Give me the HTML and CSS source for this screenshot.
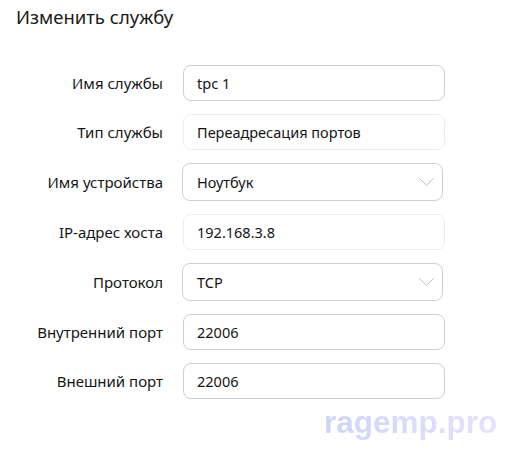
FILE: index.html
```html
<!DOCTYPE html>
<html lang="ru">
<head>
<meta charset="utf-8">
<link rel="stylesheet" href="styles.css">
</head>
<body>
<div class="page">
  <h1 class="title">Изменить службу</h1>
  <form class="form">
    <label class="label">Имя службы</label>
    <div class="input">tpc 1</div>

    <label class="label">Тип службы</label>
    <div class="input input--disabled">Переадресация портов</div>

    <label class="label">Имя устройства</label>
    <div class="select">
      <span>Ноутбук</span>
      <svg class="chev" width="15" height="8" viewBox="0 0 15 8"><path d="M0.5 0.5 L7.5 7.2 L14.5 0.5" fill="none" stroke="#bdbdbd" stroke-width="1"/></svg>
    </div>

    <label class="label">IP-адрес хоста</label>
    <div class="input input--disabled">192.168.3.8</div>

    <label class="label">Протокол</label>
    <div class="select">
      <span>TCP</span>
      <svg class="chev" width="15" height="8" viewBox="0 0 15 8"><path d="M0.5 0.5 L7.5 7.2 L14.5 0.5" fill="none" stroke="#bdbdbd" stroke-width="1"/></svg>
    </div>

    <label class="label">Внутренний порт</label>
    <div class="input">22006</div>

    <label class="label">Внешний порт</label>
    <div class="input">22006</div>
  </form>
  <div class="watermark">ragemp.pro</div>
</div>
</body>
</html>
```

FILE: styles.css
```css
* { box-sizing: border-box; }
html, body {
  margin: 0;
  padding: 0;
  background: #ffffff;
}
body {
  font-family: "Noto Sans", "Open Sans", sans-serif;
  color: #1c1c1c;
  width: 507px;
  height: 457px;
  overflow: hidden;
}
.page {
  position: relative;
  height: 457px;
  padding: 4px 0 0 16px;
}
.title {
  margin: 0;
  font-size: 18.5px;
  line-height: 25px;
  font-weight: 400;
  color: #1a1a1a;
}
.form {
  display: grid;
  grid-template-columns: 147px 262px;
  column-gap: 20px;
  row-gap: 13px;
  align-items: center;
  margin-top: 36px;
}
.label {
  text-align: right;
  font-size: 15px;
  color: #151515;
}
.input {
  height: 36px;
  border: 1px solid #cfcfcf;
  border-radius: 8px;
  padding: 0 13px;
  display: flex;
  align-items: center;
  font-size: 14.5px;
  color: #141414;
}
.input--disabled {
  border-color: #ededed;
}
.select {
  height: 38px;
  width: 261px;
  margin-left: -1px;
  border: 1px solid #cfcfcf;
  border-radius: 8px;
  padding: 0 8px 0 14px;
  display: flex;
  align-items: center;
  justify-content: space-between;
  font-size: 14.5px;
  color: #141414;
}
.chev { display: block; }
.watermark {
  position: absolute;
  left: 324px;
  top: 404px;
  font-family: "Liberation Sans", Arial, sans-serif;
  font-weight: 700;
  font-size: 31.5px;
  line-height: 36px;
  background: linear-gradient(90deg, #ccd5fb, #e8e0fb);
  -webkit-background-clip: text;
  background-clip: text;
  color: transparent;
}
```
